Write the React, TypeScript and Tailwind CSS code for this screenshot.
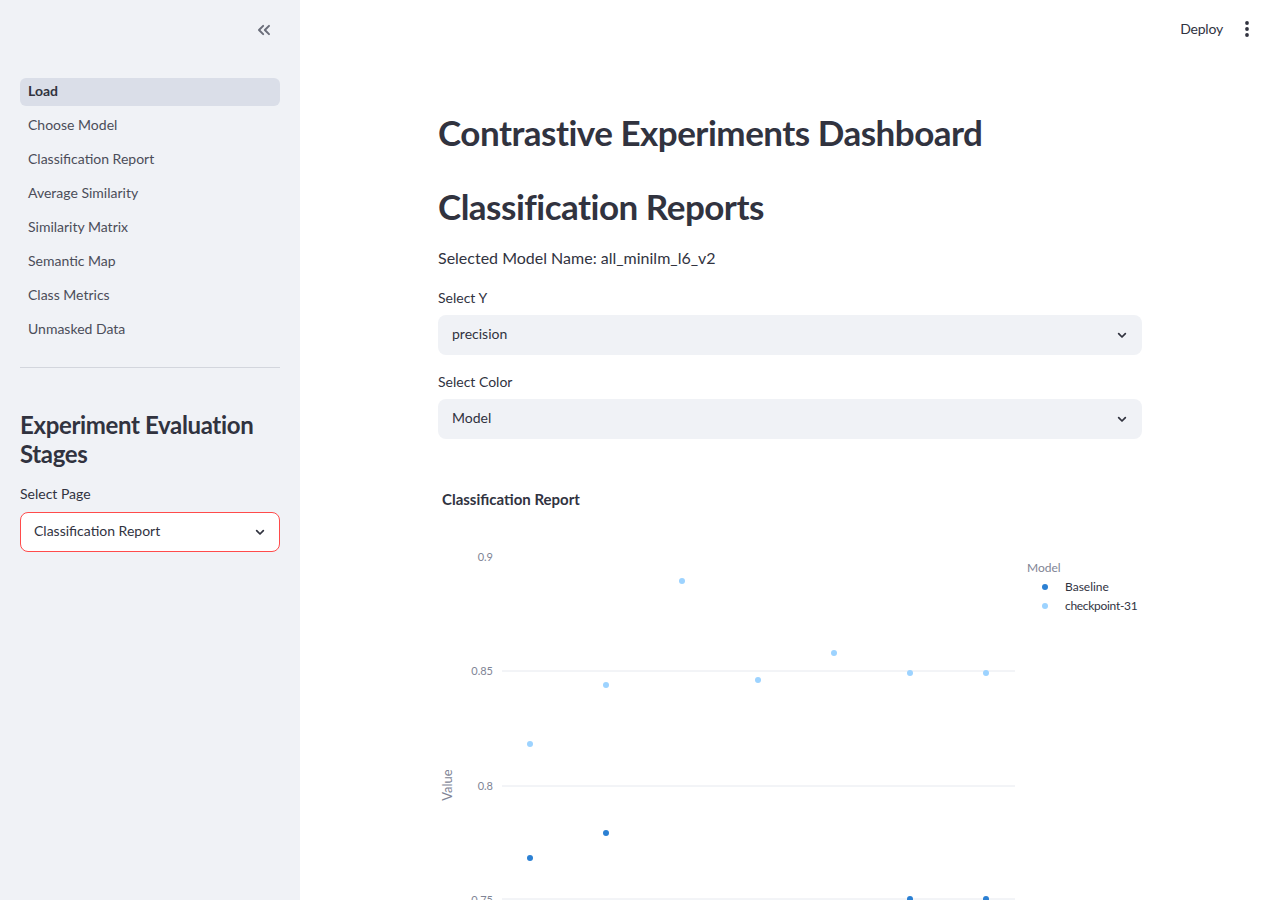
import React from 'react';

const navItems = [
    'Load',
    'Choose Model',
    'Classification Report',
    'Average Similarity',
    'Similarity Matrix',
    'Semantic Map',
    'Class Metrics',
    'Unmasked Data',
];

const checkpoint = [
    [92, 224], [168, 165], [244, 61], [320, 160], [396, 133], [472, 153], [548, 153],
];
const baseline = [
    [92, 338], [168, 313], [472, 379], [548, 379],
];

const Chevron = () => (
    <svg width="16" height="16" viewBox="0 0 24 24" fill="none" stroke="#31333f" strokeWidth="2.6" strokeLinecap="round" strokeLinejoin="round">
        <path d="M7 10l5 5 5-5" />
    </svg>
);

const Select = ({ value, tone }: { value: string; tone: 'main' | 'side' }) => (
    <div
        className={
            tone === 'main'
                ? 'h-10 rounded-lg bg-[#f0f2f6] flex items-center justify-between pl-[14px] pr-[12px]'
                : 'h-10 rounded-lg bg-white border border-[#ff4b4b] flex items-center justify-between pl-[13px] pr-[11px]'
        }
    >
        <span className="text-[14px] leading-5 -mt-[2px] text-[#31333f]">{value}</span>
        <Chevron />
    </div>
);

const Chart = () => (
    <svg width="704" height="380" className="block overflow-visible">
        {[151, 266, 379].map(y => (
            <line key={y} x1="64" x2="577" y1={y} y2={y} stroke="#e6e9ef" strokeWidth="1" />
        ))}
        <g fill="#808495" fontSize="11" textAnchor="end">
            <text x="55" y="41">0.9</text>
            <text x="55" y="155">0.85</text>
            <text x="55" y="270">0.8</text>
            <text x="55" y="384">0.75</text>
        </g>
        <text x="14" y="265" fill="#808495" fontSize="13" textAnchor="middle" transform="rotate(-90 14 265)">Value</text>
        {checkpoint.map(([x, y], i) => (
            <circle key={'c' + i} cx={x} cy={y} r="3" fill="#9dd3ff" />
        ))}
        {baseline.map(([x, y], i) => (
            <circle key={'b' + i} cx={x} cy={y} r="3" fill="#2b80d3" />
        ))}
        <text x="589" y="52" fill="#808495" fontSize="12">Model</text>
        <circle cx="607" cy="67" r="3" fill="#2b80d3" />
        <text x="627" y="71" fill="#31333f" fontSize="12">Baseline</text>
        <circle cx="607" cy="86" r="3" fill="#9dd3ff" />
        <text x="627" y="90" fill="#31333f" fontSize="12" letterSpacing="-0.3">checkpoint-31</text>
    </svg>
);

export default function App() {
    return (
        <div className="flex h-[900px] overflow-hidden bg-white text-[#31333f] font-['Lato',sans-serif]">
            {/* Sidebar */}
            <aside className="w-[300px] shrink-0 bg-[#f0f2f6] px-5">
                <div className="flex justify-end pt-[20px] pr-[6px]">
                    <svg width="20" height="20" viewBox="0 0 24 24" fill="none" stroke="#6b6e7a" strokeWidth="2.4" strokeLinecap="round" strokeLinejoin="round">
                        <path d="M11 17l-5-5 5-5" />
                        <path d="M18 17l-5-5 5-5" />
                    </svg>
                </div>
                <nav className="mt-[38px] flex flex-col gap-[6px]">
                    {navItems.map((item, i) => (
                        <div
                            key={item}
                            className={`h-[28px] rounded-md px-2 flex items-center text-[14px] leading-5 ${
                                i === 0 ? 'bg-[#dadee8] font-bold text-[#31333f]' : 'text-[#4b4d59]'
                            }`}
                        >
                            <span className="-mt-[3px]">{item}</span>
                        </div>
                    ))}
                </nav>
                <div className="mt-[23px] h-px bg-[#d3d6dd]" />
                <h2 className="mt-[42px] text-[24px] leading-[29px] font-bold tracking-[-0.35px] text-[#31333f]">
                    Experiment Evaluation Stages
                </h2>
                <div className="mt-[16px] text-[14px] leading-5 text-[#31333f]">Select Page</div>
                <div className="mt-[8px]">
                    <Select value="Classification Report" tone="side" />
                </div>
            </aside>

            {/* Main */}
            <main className="flex-1 flex flex-col">
                <header className="h-[58px] flex items-center justify-end gap-[17px] pr-[26px]">
                    <span className="text-[14px] leading-5 tracking-[-0.2px] text-[#31333f]">Deploy</span>
                    <svg width="14" height="20" viewBox="0 0 14 20" fill="#31333f">
                        <circle cx="7" cy="4" r="1.9" />
                        <circle cx="7" cy="10" r="1.9" />
                        <circle cx="7" cy="16" r="1.9" />
                    </svg>
                </header>
                <div className="w-[704px] mx-auto">
                    <h1 className="mt-[54px] text-[35px] leading-[43px] font-bold tracking-[-0.5px]">Contrastive Experiments Dashboard</h1>
                    <h1 className="mt-[31px] text-[35px] leading-[43px] font-bold tracking-[-0.5px]">Classification Reports</h1>
                    <p className="mt-[18px] text-[16px] leading-6">Selected Model Name: all_minilm_l6_v2</p>
                    <div className="mt-[18px] text-[14px] leading-5">Select Y</div>
                    <div className="mt-[7px]">
                        <Select value="precision" tone="main" />
                    </div>
                    <div className="mt-[17px] text-[14px] leading-5">Select Color</div>
                    <div className="mt-[7px]">
                        <Select value="Model" tone="main" />
                    </div>
                    <div className="mt-[50px] pl-1 text-[15px] leading-5 font-bold">Classification Report</div>
                    <div className="mt-[11px]">
                        <Chart />
                    </div>
                </div>
            </main>
        </div>
    );
}
